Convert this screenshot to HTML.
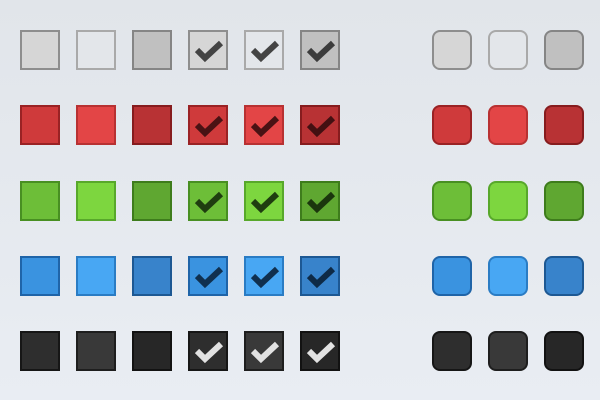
<!DOCTYPE html>
<html><head><style>
html,body{margin:0;padding:0}
body{width:600px;height:400px;background:linear-gradient(#e1e5ea,#e9edf3);position:relative;overflow:hidden}
.b{position:absolute;width:40px;height:40px;box-sizing:border-box;border:2px solid}
.r{border-radius:8px}
.b svg{position:absolute;left:-2px;top:-2px}
</style></head><body>
<!-- row 1 gray -->
<div class="b" style="left:20px;top:30px;background:#d6d6d6;border-color:#8e8e8e"></div>
<div class="b" style="left:76px;top:30px;background:#e3e6ea;border-color:#a9a9a9"></div>
<div class="b" style="left:132px;top:30px;background:#c0c0c0;border-color:#858585"></div>
<div class="b" style="left:188px;top:30px;background:#d6d6d6;border-color:#8e8e8e"><svg width="40" height="40"><path d="M9 20 L17 28 L33 13" fill="none" stroke="#444" stroke-width="6"/></svg></div>
<div class="b" style="left:244px;top:30px;background:#e3e6ea;border-color:#a9a9a9"><svg width="40" height="40"><path d="M9 20 L17 28 L33 13" fill="none" stroke="#444" stroke-width="6"/></svg></div>
<div class="b" style="left:300px;top:30px;background:#c0c0c0;border-color:#858585"><svg width="40" height="40"><path d="M9 20 L17 28 L33 13" fill="none" stroke="#3c3c3c" stroke-width="6"/></svg></div>
<div class="b r" style="left:432px;top:30px;background:#d6d6d6;border-color:#8e8e8e"></div>
<div class="b r" style="left:488px;top:30px;background:#e3e6ea;border-color:#a9a9a9"></div>
<div class="b r" style="left:544px;top:30px;background:#c0c0c0;border-color:#858585"></div>
<!-- row 2 red -->
<div class="b" style="left:20px;top:105px;background:#cf3a3b;border-color:#9a2224"></div>
<div class="b" style="left:76px;top:105px;background:#e34546;border-color:#b83132"></div>
<div class="b" style="left:132px;top:105px;background:#b83234;border-color:#861c1e"></div>
<div class="b" style="left:188px;top:105px;background:#cf3a3b;border-color:#9a2224"><svg width="40" height="40"><path d="M9 20 L17 28 L33 13" fill="none" stroke="#4a1214" stroke-width="6"/></svg></div>
<div class="b" style="left:244px;top:105px;background:#e34546;border-color:#b83132"><svg width="40" height="40"><path d="M9 20 L17 28 L33 13" fill="none" stroke="#4a1214" stroke-width="6"/></svg></div>
<div class="b" style="left:300px;top:105px;background:#b83234;border-color:#861c1e"><svg width="40" height="40"><path d="M9 20 L17 28 L33 13" fill="none" stroke="#431012" stroke-width="6"/></svg></div>
<div class="b r" style="left:432px;top:105px;background:#cf3a3b;border-color:#9a2224"></div>
<div class="b r" style="left:488px;top:105px;background:#e34546;border-color:#b83132"></div>
<div class="b r" style="left:544px;top:105px;background:#b83234;border-color:#861c1e"></div>
<!-- row 3 green -->
<div class="b" style="left:20px;top:181px;background:#6dbe38;border-color:#488f22"></div>
<div class="b" style="left:76px;top:181px;background:#7dd63f;border-color:#58a82b"></div>
<div class="b" style="left:132px;top:181px;background:#5fa731;border-color:#3e7c1c"></div>
<div class="b" style="left:188px;top:181px;background:#6dbe38;border-color:#488f22"><svg width="40" height="40"><path d="M9 20 L17 28 L33 13" fill="none" stroke="#1f3d10" stroke-width="6"/></svg></div>
<div class="b" style="left:244px;top:181px;background:#7dd63f;border-color:#58a82b"><svg width="40" height="40"><path d="M9 20 L17 28 L33 13" fill="none" stroke="#1f3d10" stroke-width="6"/></svg></div>
<div class="b" style="left:300px;top:181px;background:#5fa731;border-color:#3e7c1c"><svg width="40" height="40"><path d="M9 20 L17 28 L33 13" fill="none" stroke="#1b360d" stroke-width="6"/></svg></div>
<div class="b r" style="left:432px;top:181px;background:#6dbe38;border-color:#488f22"></div>
<div class="b r" style="left:488px;top:181px;background:#7dd63f;border-color:#58a82b"></div>
<div class="b r" style="left:544px;top:181px;background:#5fa731;border-color:#3e7c1c"></div>
<!-- row 4 blue -->
<div class="b" style="left:20px;top:256px;background:#3a93e0;border-color:#1f64a8"></div>
<div class="b" style="left:76px;top:256px;background:#48a7f3;border-color:#2a7cc4"></div>
<div class="b" style="left:132px;top:256px;background:#3883cb;border-color:#1d5893"></div>
<div class="b" style="left:188px;top:256px;background:#3a93e0;border-color:#1f64a8"><svg width="40" height="40"><path d="M9 20 L17 28 L33 13" fill="none" stroke="#10304f" stroke-width="6"/></svg></div>
<div class="b" style="left:244px;top:256px;background:#48a7f3;border-color:#2a7cc4"><svg width="40" height="40"><path d="M9 20 L17 28 L33 13" fill="none" stroke="#10304f" stroke-width="6"/></svg></div>
<div class="b" style="left:300px;top:256px;background:#3883cb;border-color:#1d5893"><svg width="40" height="40"><path d="M9 20 L17 28 L33 13" fill="none" stroke="#0e2a46" stroke-width="6"/></svg></div>
<div class="b r" style="left:432px;top:256px;background:#3a93e0;border-color:#1f64a8"></div>
<div class="b r" style="left:488px;top:256px;background:#48a7f3;border-color:#2a7cc4"></div>
<div class="b r" style="left:544px;top:256px;background:#3883cb;border-color:#1d5893"></div>
<!-- row 5 black -->
<div class="b" style="left:20px;top:331px;background:#2e2e2e;border-color:#161616"></div>
<div class="b" style="left:76px;top:331px;background:#393939;border-color:#1e1e1e"></div>
<div class="b" style="left:132px;top:331px;background:#272727;border-color:#121212"></div>
<div class="b" style="left:188px;top:331px;background:#2e2e2e;border-color:#161616"><svg width="40" height="40"><path d="M9 20 L17 28 L33 13" fill="none" stroke="#e2e2e2" stroke-width="6"/></svg></div>
<div class="b" style="left:244px;top:331px;background:#393939;border-color:#1e1e1e"><svg width="40" height="40"><path d="M9 20 L17 28 L33 13" fill="none" stroke="#e2e2e2" stroke-width="6"/></svg></div>
<div class="b" style="left:300px;top:331px;background:#272727;border-color:#121212"><svg width="40" height="40"><path d="M9 20 L17 28 L33 13" fill="none" stroke="#e2e2e2" stroke-width="6"/></svg></div>
<div class="b r" style="left:432px;top:331px;background:#2e2e2e;border-color:#161616"></div>
<div class="b r" style="left:488px;top:331px;background:#393939;border-color:#1e1e1e"></div>
<div class="b r" style="left:544px;top:331px;background:#272727;border-color:#121212"></div>
</body></html>
